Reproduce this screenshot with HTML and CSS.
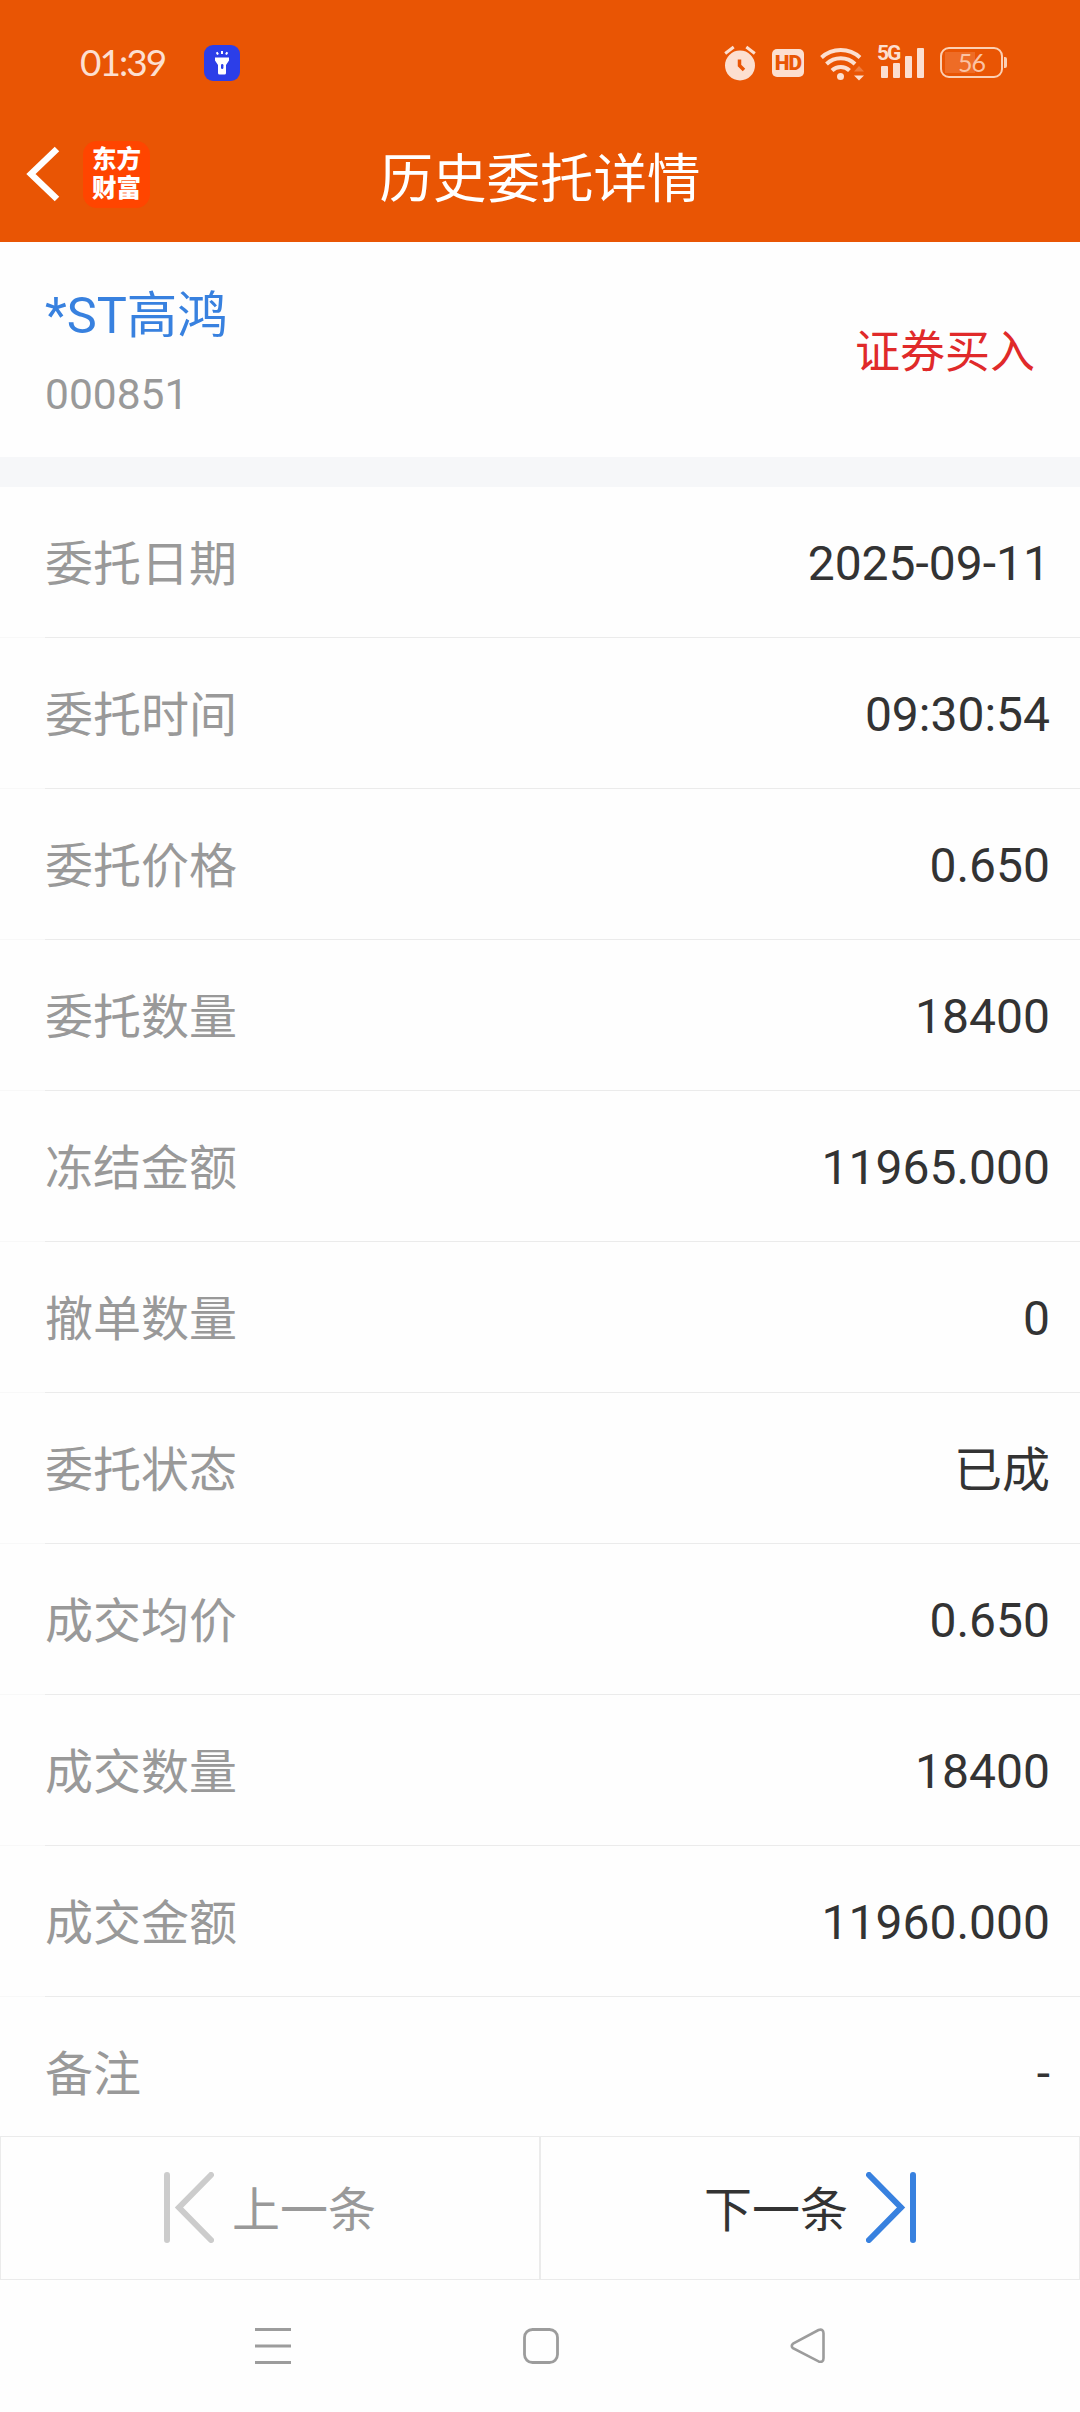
FILE: index.html
```html
<!DOCTYPE html>
<html lang="zh-CN">

<head>
  <meta charset="UTF-8">
  <meta name="viewport" content="width=device-width, initial-scale=1">
  <title>历史委托详情</title>
  <link rel="stylesheet" href="styles.css">
</head>

<body>
  <header>
    <div class="status-bar">
      <span class="clock">01:39</span>
      <svg class="torch" width="36" height="36" viewBox="0 0 36 36">
        <rect width="36" height="36" rx="9" fill="#2c3ee8"/>
        <path d="M11 12.500h14v3l-3 4.500v8a1.500 1.500 0 0 1-1.500 1.500h-5a1.500 1.500 0 0 1-1.500-1.500v-8l-3-4.500z" fill="#fff"/>
        <rect x="17" y="19" width="2.400" height="5" rx="1.200" fill="#2c3ee8"/>
        <path d="M12.700 7.300l1.300 2.300M18 6v3M23.300 7.300l-1.300 2.300" stroke="#fff" stroke-width="2"/>
      </svg>
      <div class="status-icons">
        <svg width="32" height="36" viewBox="0 0 32 36">
          <circle cx="16" cy="20.500" r="15" fill="#fcdfd0"/>
          <path d="M1.200 8.500l8.500-6.500M30.800 8.500l-8.500-6.500" stroke="#fcdfd0" stroke-width="3"/>
          <path d="M15.500 14.500v6l4.500 4.500" stroke="#e95504" stroke-width="3.500" fill="none"/>
        </svg>
        <span class="hd">HD</span>
        <svg class="wifi" width="44" height="36" viewBox="0 0 44 36">
          <g fill="none" stroke="#fcdfd0" stroke-width="4">
            <path d="M1.500 12.500a28.500 28.500 0 0 1 38.500 0"/>
            <path d="M6.500 19a20.500 20.500 0 0 1 28.500 0"/>
            <path d="M12 25.500a12.500 12.500 0 0 1 17.500 0"/>
          </g>
          <circle cx="20.500" cy="31.500" r="3.500" fill="#fcdfd0"/>
          <path d="M34 26.500h10l-5-5.500z" fill="#f07c3e"/>
          <path d="M34 30.500h10l-5 5z" fill="#fcdfd0"/>
        </svg>
        <div class="signal">
          <span>5G</span>
          <svg width="43" height="30" viewBox="0 0 43 30" fill="#fcdfd0">
            <rect y="18" width="7" height="12" rx="1"/>
            <rect x="12" y="15" width="7" height="15" rx="1"/>
            <rect x="24" y="8" width="7" height="22" rx="1"/>
            <rect x="36" y="0" width="7" height="30" rx="1"/>
          </svg>
        </div>
        <div class="battery"><span>56</span></div>
      </div>
    </div>

    <div class="title-bar">
      <svg class="back" width="34" height="56" viewBox="0 0 34 56">
        <path d="M31 3L5 28l26 25" fill="none" stroke="#fff" stroke-width="6.500"/>
      </svg>
      <div class="logo">东方<br>财富</div>
      <h1>历史委托详情</h1>
    </div>
  </header>

  <section class="stock">
    <div>
      <div class="stock-name">*ST高鸿</div>
      <div class="stock-code">000851</div>
    </div>
    <div class="direction">证券买入</div>
  </section>

  <section class="details">
    <div class="row"><span class="label">委托日期</span><span>2025-09-11</span></div>
    <div class="row"><span class="label">委托时间</span><span>09:30:54</span></div>
    <div class="row"><span class="label">委托价格</span><span>0.650</span></div>
    <div class="row"><span class="label">委托数量</span><span>18400</span></div>
    <div class="row"><span class="label">冻结金额</span><span>11965.000</span></div>
    <div class="row"><span class="label">撤单数量</span><span>0</span></div>
    <div class="row"><span class="label">委托状态</span><span class="status">已成</span></div>
    <div class="row"><span class="label">成交均价</span><span>0.650</span></div>
    <div class="row"><span class="label">成交数量</span><span>18400</span></div>
    <div class="row"><span class="label">成交金额</span><span>11960.000</span></div>
    <div class="row"><span class="label">备注</span><span>-</span></div>
  </section>

  <div class="pager">
    <div class="prev">
      <svg width="50" height="71" viewBox="0 0 50 71" fill="none" stroke="#ccc" stroke-width="6" stroke-linecap="round">
        <path d="M3 3v65M47 3L15 35.500 47 68"/>
      </svg>
      <span>上一条</span>
    </div>
    <div class="next">
      <span>下一条</span>
      <svg width="50" height="71" viewBox="0 0 50 71" fill="none" stroke="#3881df" stroke-width="6" stroke-linecap="round">
        <path d="M47 3v65M3 3l32 32.500L3 68"/>
      </svg>
    </div>
  </div>

  <nav>
    <svg width="36" height="36" viewBox="0 0 36 36" stroke="#9c9c9c" stroke-width="3">
      <path d="M0 1.500h36M0 18h36M0 34.500h36"/>
    </svg>
    <svg width="36" height="36" viewBox="0 0 36 36" fill="none" stroke="#9c9c9c" stroke-width="2.800">
      <rect x="1.500" y="1.500" width="33" height="33" rx="8"/>
    </svg>
    <svg width="36" height="36" viewBox="0 0 36 36" fill="none" stroke="#9c9c9c" stroke-width="2.600">
      <path d="M3 15.700L28.500 2q5-1.500 5 3.200v25q0 4.700-5 3.200L3 20.200q-2.500-2.200 0-4.500z"/>
    </svg>
  </nav>
</body>

</html>
```
FILE: styles.css
```css
* {
  box-sizing: border-box;
}

body {
  margin: 0;
  height: 2412px;
  display: flex;
  flex-direction: column;
  overflow: hidden;
  background-color: #fefefe;
  color: #333;
  font-family: Roboto, "Noto Sans CJK SC", sans-serif;
  font-size: 48px;
  line-height: 64px;
}

svg {
  display: block;
  flex-shrink: 0;
}

header {
  height: 242px;
  background-color: #e95504;
  color: #fff;
}

/* status bar */
.status-bar {
  height: 125px;
  display: flex;
  align-items: center;
  padding: 0 73px 0 80px;
  color: #fcdfd0;
}

.clock {
  width: 124px;
  padding-bottom: 1px;
  font-family: Lato, sans-serif;
  font-size: 37px;
  letter-spacing: -2px;
  line-height: 40px;
}

.status-icons {
  display: flex;
  align-items: center;
  margin-left: auto;
}

.hd {
  width: 32px;
  height: 28px;
  margin-left: 16px;
  border-radius: 5px;
  background-color: #fcdfd0;
  color: #e95504;
  font-size: 21px;
  font-weight: 900;
  line-height: 29px;
  letter-spacing: -1px;
  text-align: center;
}

.wifi {
  margin-left: 16px;
}

.signal {
  position: relative;
  margin-left: 17px;
}

.signal span {
  position: absolute;
  left: -4px;
  top: -5px;
  font-size: 21px;
  font-weight: 700;
  letter-spacing: -2px;
  line-height: 20px;
}

.battery {
  position: relative;
  width: 63px;
  height: 31px;
  margin: 0 4px 0 16px;
  border: 2px solid #fcd0b4;
  border-radius: 9px;
  color: #fbc3a4;
  font-family: Lato, sans-serif;
  font-size: 25px;
  letter-spacing: -1px;
  line-height: 27px;
  text-align: center;
  background: linear-gradient(#ee6c26, #ee6c26) 3px 3px / 30px 21px no-repeat;
}

.battery::after {
  content: "";
  position: absolute;
  right: -6px;
  top: 8px;
  width: 3px;
  height: 11px;
  border-radius: 0 2px 2px 0;
  background-color: #fcd0b4;
}

/* title */
.title-bar {
  height: 98px;
  display: flex;
  align-items: center;
  padding: 0 26px;
}

.logo {
  width: 67px;
  height: 67px;
  margin-left: 23px;
  padding-top: 4px;
  border-radius: 14px;
  background-color: #ff4500;
  font-size: 24.500px;
  font-weight: 900;
  line-height: 29px;
  text-align: center;
}

h1 {
  flex: 1;
  margin: 12px 124px 0 0;
  font-size: 53.500px;
  font-weight: 400;
  line-height: 70px;
  text-align: center;
}

/* stock summary */
.stock {
  height: 245px;
  display: flex;
  justify-content: space-between;
  padding: 37px 45px 0;
  border-bottom: 30px solid #f6f7f9;
}

.stock-name {
  color: #3881df;
  font-size: 50.500px;
  line-height: 74px;
}

.stock-code {
  margin-top: 12px;
  color: #999;
  font-size: 42.500px;
  line-height: 60px;
}

.direction {
  padding-top: 40px;
  color: #e02a2a;
  font-size: 45px;
  line-height: 68px;
}

/* order details */
.details {
  height: 1649px;
  overflow: hidden;
}

.row {
  height: 151px;
  display: flex;
  justify-content: space-between;
  align-items: center;
  padding: 2px 30px 0 45px;
  background: linear-gradient(to right, #f8f8f8 45px, #ebebeb 45px) bottom / 100% 1px no-repeat;
}

.label,
.status {
  padding-top: 2px;
}

.label {
  color: #999;
}

/* previous / next */
.pager {
  height: 144px;
  display: flex;
  border: 1px solid #ebebeb;
}

.pager div {
  flex: 1;
  display: flex;
  justify-content: center;
  align-items: center;
  gap: 18px;
}

.pager svg {
  margin-bottom: 1px;
}

.pager span {
  padding-top: 5px;
}

.prev {
  color: #999;
  border-right: 2px solid #ebebeb;
}

nav {
  flex: 1;
  display: flex;
  justify-content: space-between;
  padding: 48px 254px 0 255px;
}
```
